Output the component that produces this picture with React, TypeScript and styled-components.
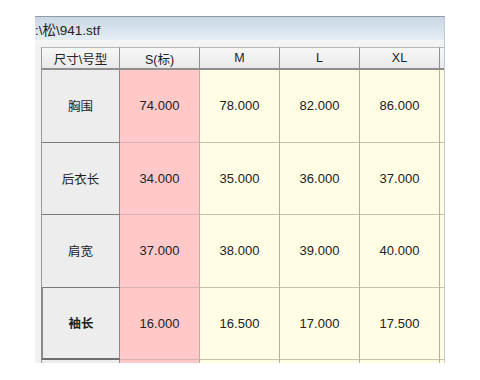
import React from 'react';
import styled, { createGlobalStyle } from 'styled-components';

const GlobalStyle = createGlobalStyle`
  html, body {
    margin: 0;
    padding: 0;
    background: #ffffff;
  }
  body {
    font-family: 'Liberation Sans', 'Noto Sans CJK SC', sans-serif;
    color: #1e1e1e;
  }
`;

const Window = styled.div`
  margin: 16px 0 0 35px;
  width: 410px;
  border-top: 1px solid #8e9aa6;
  border-right: 1px solid #c0cad4;
  box-sizing: border-box;
`;

const TitleBar = styled.div`
  height: 23px;
  display: flex;
  align-items: center;
  font-size: 13.5px;
  color: #222;
  background: linear-gradient(to bottom, #c9d7e5 0%, #d8e3ee 55%, #e6edf4 100%);
  white-space: nowrap;
  overflow: hidden;
`;

const Body = styled.div`
  background: linear-gradient(to bottom, #f3f5f7 0px, #f1f1f1 8px);
  padding: 7px 0 0 6px;
  overflow: hidden;
`;

const Grid = styled.div`
  display: grid;
  grid-template-columns: 79px repeat(4, 80px) 40px;
  grid-template-rows: 23px repeat(4, 72.5px) 3px;
  width: 440px;
  background: #fffde3;
`;

const HeadCell = styled.div<{ $corner?: boolean }>`
  display: flex;
  align-items: center;
  justify-content: center;
  font-size: 12.5px;
  color: #222;
  background: linear-gradient(to bottom, #f7f7f7, #e9e9e9);
  border-top: 1px solid #b8b8b8;
  border-bottom: 2px solid #8e8e8e;
  border-right: 1px solid #8e8e8e;
  border-left: ${p => (p.$corner ? '1px solid #9a9a9a' : 'none')};
  box-sizing: border-box;
`;

const RowHead = styled.div<{ $active?: boolean }>`
  display: flex;
  align-items: center;
  justify-content: center;
  font-size: 12.5px;
  font-weight: ${p => (p.$active ? 'bold' : 'normal')};
  color: #1e1e1e;
  background: #ededed;
  border-left: ${p => (p.$active ? '2px solid #8a8a8a' : '1px solid #9a9a9a')};
  border-right: 1px solid #8a8a8a;
  border-bottom: ${p => (p.$active ? '2px solid #6e6e6e' : '1px solid #7a7a7a')};
  box-sizing: border-box;
`;

const Cell = styled.div<{ $base?: boolean }>`
  display: flex;
  align-items: center;
  justify-content: center;
  font-size: 13px;
  color: #222;
  background: ${p => (p.$base ? '#ffc9c9' : '#fffde3')};
  border-right: 1px solid ${p => (p.$base ? '#c8a8a8' : '#b1b09c')};
  border-bottom: 1px solid ${p => (p.$base ? '#d9b3b3' : '#c3c2ac')};
  box-sizing: border-box;
`;

const Stub = styled.div<{ $base?: boolean; $first?: boolean }>`
  background: ${p => (p.$first ? '#ededed' : p.$base ? '#ffc9c9' : '#fffde3')};
  border-left: ${p => (p.$first ? '1px solid #9a9a9a' : 'none')};
  border-right: 1px solid ${p => (p.$first ? '#8a8a8a' : '#b1b09c')};
  box-sizing: border-box;
`;

const sizes = ['S(标)', 'M', 'L', 'XL'];

const rows = [
  { name: '胸围', values: ['74.000', '78.000', '82.000', '86.000'] },
  { name: '后衣长', values: ['34.000', '35.000', '36.000', '37.000'] },
  { name: '肩宽', values: ['37.000', '38.000', '39.000', '40.000'] },
  { name: '袖长', values: ['16.000', '16.500', '17.000', '17.500'] },
];

export default function App() {
  return (
    <>
      <GlobalStyle />
      <Window>
        <TitleBar>:\松\941.stf</TitleBar>
        <Body>
          <Grid>
            <HeadCell $corner>尺寸\号型</HeadCell>
            {sizes.map(s => (
              <HeadCell key={s}>{s}</HeadCell>
            ))}
            <HeadCell />
            {rows.map((row, ri) => (
              <React.Fragment key={row.name}>
                <RowHead $active={ri === rows.length - 1}>{row.name}</RowHead>
                {row.values.map((v, i) => (
                  <Cell key={i} $base={i === 0}>
                    {v}
                  </Cell>
                ))}
                <Cell />
              </React.Fragment>
            ))}
            <Stub $first />
            {sizes.map((s, i) => (
              <Stub key={s} $base={i === 0} />
            ))}
            <Stub />
          </Grid>
        </Body>
      </Window>
    </>
  );
}
